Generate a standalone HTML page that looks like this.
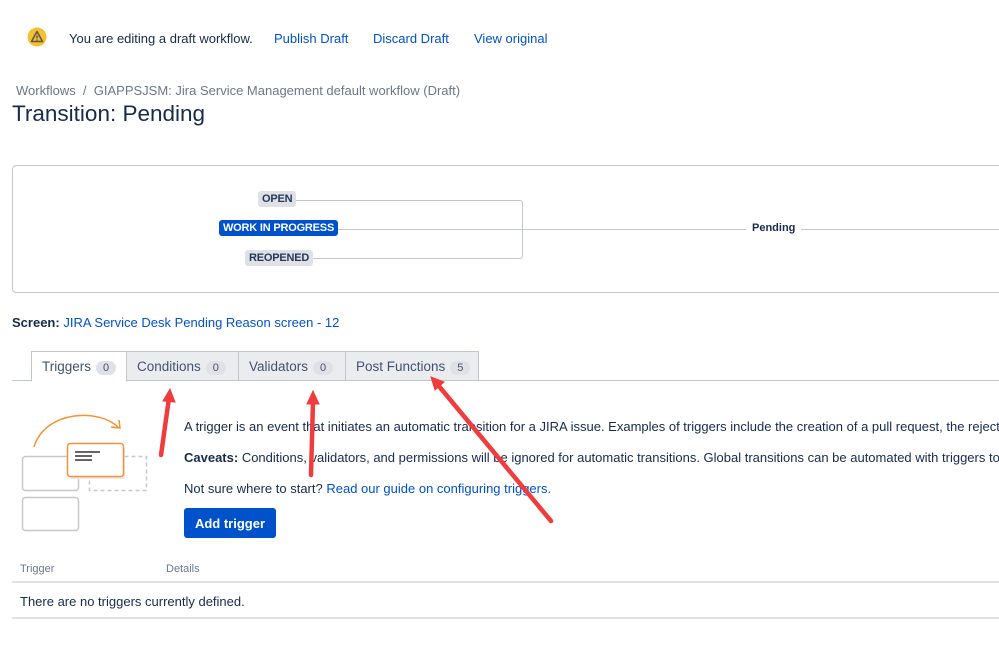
<!DOCTYPE html>
<html><head><meta charset="utf-8"><style>
*{margin:0;padding:0;box-sizing:border-box}
html,body{width:999px;height:657px;overflow:hidden}
body{background:#fff;font-family:"Liberation Sans",sans-serif;color:#172b4d;position:relative;font-size:13px}
#w{position:absolute;left:0;top:0;width:999px;height:657px;overflow:hidden}
.a{position:absolute;white-space:nowrap}
a,.lk{color:#0052cc;text-decoration:none}
.lz{background:#dfe1e6;color:#253858;font-size:11px;font-weight:bold;padding:2px 4px;border-radius:3px;letter-spacing:-0.2px}
.tab{position:absolute;top:351px;height:30px;border:1px solid #c1c7d0;background:#ebecf0;font-size:13.5px;color:#42526e;padding:7px 0 0 10px}
.tab .c{display:inline-block;background:#dfe1e6;border-radius:10px;padding:1px 7px;font-size:11px;margin-left:5px}
</style></head><body><div id="w">
<svg class="a" style="left:27px;top:27px" width="20" height="20" viewBox="0 0 20 20"><circle cx="10" cy="10" r="9.5" fill="#f4c034"/><path d="M10 4.5 L15.5 14.5 H4.5 Z" fill="none" stroke="#5e5a4a" stroke-width="1.6" stroke-linejoin="round"/><path d="M10 8.5v3" stroke="#5e5a4a" stroke-width="1.5"/><circle cx="10" cy="13" r=".8" fill="#5e5a4a"/></svg>
<div class="a" style="left:69px;top:31px">You are editing a draft workflow.</div>
<div class="a lk" style="left:274px;top:31px">Publish Draft</div>
<div class="a lk" style="left:373px;top:31px">Discard Draft</div>
<div class="a lk" style="left:474px;top:31px">View original</div>
<div class="a" style="left:16px;top:83px;color:#6b778c">Workflows &nbsp;/ &nbsp;GIAPPSJSM: Jira Service Management default workflow (Draft)</div>
<div class="a" style="left:12px;top:101px;font-size:22.5px;color:#172b4d">Transition: Pending</div>

<div class="a" style="left:12px;top:165px;width:1000px;height:128px;border:1px solid #c1c7d0;border-radius:4px"></div>
<div class="a" style="left:290px;top:200px;width:233px;height:59px;border:1px solid #c1c7d0;border-left:none;border-radius:0 3px 3px 0"></div>
<div class="a" style="left:330px;top:229px;width:670px;height:1px;background:#c1c7d0"></div>
<div class="a" style="left:746px;top:222px;background:#fff;padding:0 6px;font-size:11px;font-weight:bold">Pending</div>
<div class="a lz" style="left:258px;top:191px">OPEN</div>
<div class="a lz" style="left:219px;top:220px;background:#0052cc;color:#fff">WORK IN PROGRESS</div>
<div class="a lz" style="left:245px;top:250px">REOPENED</div>

<div class="a" style="left:12px;top:315px"><b>Screen:</b> <span class="lk">JIRA Service Desk Pending Reason screen - 12</span></div>

<div class="a" style="left:12px;top:380px;width:990px;height:1px;background:#c1c7d0"></div>
<div class="tab" style="left:126px;width:113px">Conditions<span class="c">0</span></div>
<div class="tab" style="left:238px;width:108px">Validators<span class="c">0</span></div>
<div class="tab" style="left:345px;width:134px">Post Functions<span class="c">5</span></div>
<div class="tab" style="left:31px;width:96px;background:#fff;border-bottom-color:#fff;height:31px">Triggers<span class="c">0</span></div>

<svg class="a" style="left:15px;top:405px" width="140" height="130" viewBox="15 405 140 130">
<rect x="22.5" y="456.5" width="56" height="34" rx="3" fill="none" stroke="#c8c8c8" stroke-width="1.5"/>
<rect x="22.5" y="497.5" width="56" height="33" rx="3" fill="none" stroke="#c8c8c8" stroke-width="1.5"/>
<rect x="89.5" y="456.5" width="57" height="34" fill="none" stroke="#c8c8c8" stroke-width="1.5" stroke-dasharray="4 3"/>
<rect x="69" y="446" width="56" height="33" rx="3" fill="#e8e8e8"/>
<rect x="67.5" y="443.5" width="56" height="33" rx="3" fill="#fff" stroke="#f79232" stroke-width="1.5"/>
<path d="M75 452h25M75 456h17M75 460h17" stroke="#333" stroke-width="1.6"/>
<path d="M34 447 C45 410 100 408 119 428" fill="none" stroke="#f79232" stroke-width="1.5"/>
<path d="M111 427 L120 428 L119 420" fill="none" stroke="#f79232" stroke-width="1.5"/>
</svg>

<div class="a" style="left:184px;top:419px">A trigger is an event that initiates an automatic transition for a JIRA issue. Examples of triggers include the creation of a pull request, the rejection of a review</div>
<div class="a" style="left:184px;top:450px"><b>Caveats:</b> Conditions, validators, and permissions will be ignored for automatic transitions. Global transitions can be automated with triggers too.</div>
<div class="a" style="left:184px;top:481px">Not sure where to start? <span class="lk">Read our guide on configuring triggers.</span></div>
<div class="a" style="left:184px;top:508px;width:92px;height:30px;background:#0052cc;color:#fff;font-weight:bold;border-radius:3px;padding-top:8px;text-align:center">Add trigger</div>

<div class="a" style="left:20px;top:563px;font-size:11px;color:#6b778c">Trigger</div>
<div class="a" style="left:166px;top:563px;font-size:11px;color:#6b778c">Details</div>
<div class="a" style="left:12px;top:581px;width:990px;height:2px;background:#dfe1e6"></div>
<div class="a" style="left:20px;top:594px">There are no triggers currently defined.</div>
<div class="a" style="left:12px;top:617px;width:990px;height:2px;background:#dfe1e6"></div>

<svg class="a" style="left:0;top:0" width="999" height="657">
<g stroke="#f03c3c" stroke-width="4.5" stroke-linecap="round" fill="#f03c3c">
<line x1="161" y1="455" x2="169" y2="398"/><path d="M170 389 L175 402 L163 401Z" stroke-width="1"/>
<line x1="311" y1="475" x2="313" y2="401"/><path d="M313 391 L319 404 L307 404Z" stroke-width="1"/>
<line x1="551" y1="521" x2="438" y2="385"/><path d="M431 377 L444 382 L435 390Z" stroke-width="1"/>
</g></svg>
</div></body></html>
